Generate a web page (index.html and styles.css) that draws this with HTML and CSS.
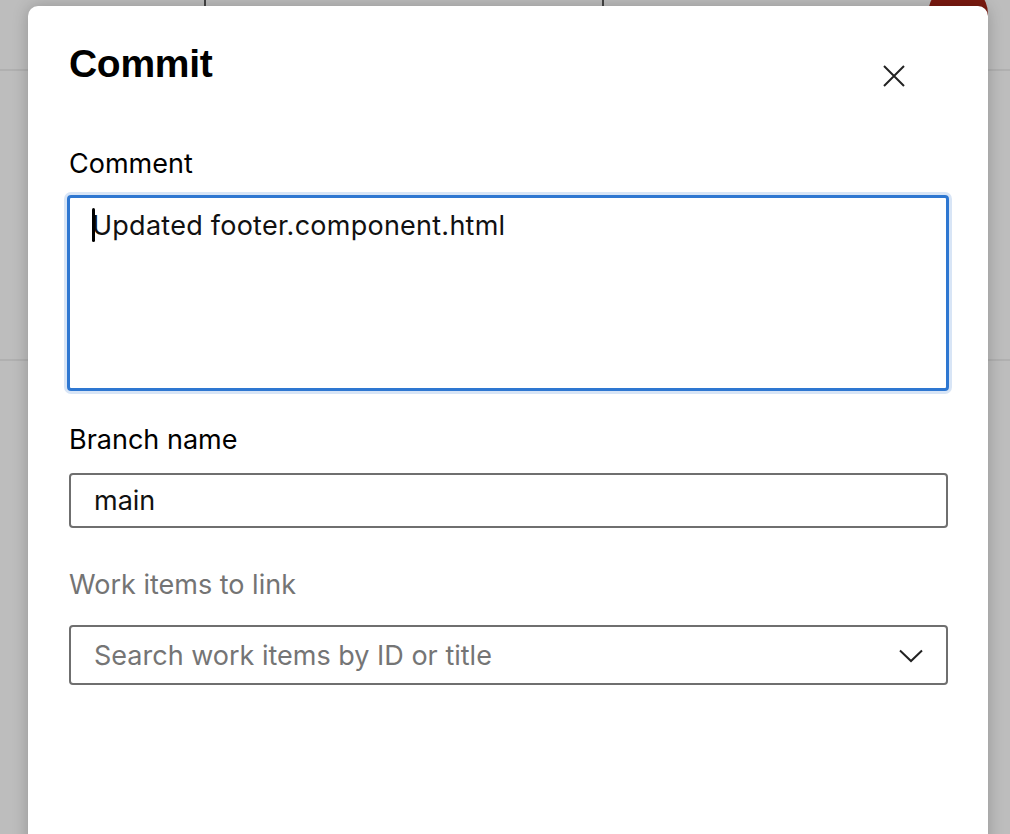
FILE: index.html
```html
<!DOCTYPE html>
<html lang="en">
<head>
<meta charset="utf-8">
<title>Commit</title>
<link rel="stylesheet" href="styles.css">
</head>
<body>
<div class="backdrop">
  <div class="bg-line bg-line-top"></div>
  <div class="bg-line bg-line-mid"></div>
  <div class="bg-tick bg-tick-1"></div>
  <div class="bg-tick bg-tick-2"></div>
  <div class="bg-avatar"></div>
</div>
<div class="dialog">
  <div class="dialog-header">
    <h1 class="dialog-title">Commit</h1>
    <button class="close-btn" aria-label="Close">
      <svg width="22" height="22" viewBox="0 0 22 22"><path d="M1 1 L21 21 M21 1 L1 21" stroke="#222" stroke-width="2" fill="none"/></svg>
    </button>
  </div>
  <div class="field">
    <label class="field-label">Comment</label>
    <div class="textarea"><span class="caret"></span>Updated footer.component.html</div>
  </div>
  <div class="field">
    <label class="field-label">Branch name</label>
    <div class="input">main</div>
  </div>
  <div class="field">
    <label class="field-label muted">Work items to link</label>
    <div class="input dropdown">
      <span class="placeholder">Search work items by ID or title</span>
      <svg class="chevron" width="24" height="14" viewBox="0 0 24 14"><path d="M1 1.5 L12 12 L23 1.5" stroke="#222" stroke-width="2" fill="none"/></svg>
    </div>
  </div>
</div>
</body>
</html>
```
FILE: styles.css
```css
html, body {
  margin: 0;
  padding: 0;
  height: 100%;
  overflow: hidden;
}
body {
  background: #bdbdbd;
  font-family: "Inter", "Liberation Sans", sans-serif;
  position: relative;
}
.backdrop {
  position: absolute;
  inset: 0;
  z-index: 0;
}
.bg-line {
  position: absolute;
  left: 0;
  right: 0;
  height: 2px;
  background: #b0b0b0;
}
.bg-line-top { top: 69px; }
.bg-line-mid { top: 359px; }
.bg-tick {
  position: absolute;
  top: 0;
  width: 2px;
  height: 8px;
  background: #444;
}
.bg-tick-1 { left: 204px; }
.bg-tick-2 { left: 602px; }
.bg-avatar {
  position: absolute;
  left: 928px;
  top: -16px;
  width: 60px;
  height: 60px;
  border-radius: 50%;
  background: #7b1a10;
}
.dialog {
  position: relative;
  z-index: 1;
  margin: 6px 0 0 28px;
  width: 960px;
  height: 900px;
  background: #fff;
  border-radius: 10px;
  box-shadow: 0 0 16px rgba(0,0,0,0.22);
  padding: 38px 41px 0 41px;
  box-sizing: border-box;
}
.dialog-header {
  display: flex;
  justify-content: space-between;
  align-items: flex-start;
  height: 39px;
}
.dialog-title {
  margin: 0;
  font-family: "Liberation Sans", Arial, sans-serif;
  font-weight: 700;
  font-size: 39px;
  line-height: 39px;
  letter-spacing: -0.3px;
  color: #000;
}
.close-btn {
  border: 0;
  background: none;
  padding: 0;
  margin: 21px 42px 0 0;
  width: 22px;
  height: 22px;
  display: block;
}
.close-btn svg { display: block; width: 22px; height: 22px; }
.field {
  display: flex;
  flex-direction: column;
}
.field-label {
  font-size: 27px;
  line-height: 33px;
  color: #000;
  margin-top: 64px;
  margin-bottom: 15px;
}
.field + .field .field-label { margin-top: 32px; margin-bottom: 17px; }
.field + .field + .field .field-label { margin-top: 40px; margin-bottom: 24px; }
.muted { color: #747474; }
.textarea {
  margin-left: -2px;
  width: 882px;
  height: 196px;
  box-sizing: border-box;
  border: 3px solid #2e77d1;
  border-radius: 4px;
  box-shadow: 0 0 0 3px #d8e5f6;
  padding: 11px 22px;
  font-size: 27px;
  line-height: 33px;
  letter-spacing: 0.25px;
  color: #111;
  position: relative;
}
.caret {
  position: absolute;
  left: 22px;
  top: 10px;
  width: 3px;
  height: 34px;
  background: #000;
  border-radius: 1.5px;
}
.input {
  width: 879px;
  height: 55px;
  box-sizing: border-box;
  border: 2px solid #6f6f6f;
  border-radius: 4px;
  padding: 0 23px;
  font-size: 27px;
  color: #111;
  display: flex;
  align-items: center;
}
.dropdown {
  height: 60px;
  justify-content: space-between;
}
.placeholder { color: #757575; }
.chevron {
  display: block;
  width: 24px;
  height: 14px;
  margin-right: 0;
  margin-top: 2px;
}
```
